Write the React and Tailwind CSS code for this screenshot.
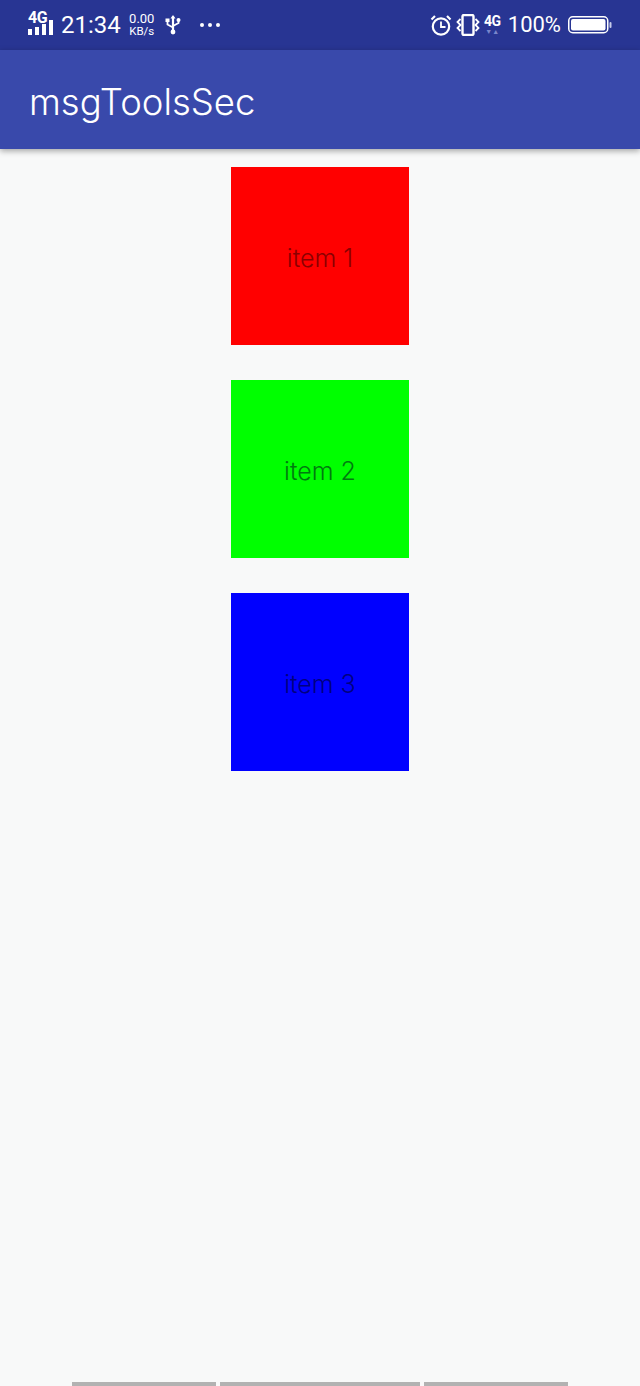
const items = [
  { label: 'item 1', color: 'bg-[#ff0000]', text: 'text-[#8a0000]' },
  { label: 'item 2', color: 'bg-[#00ff00]', text: 'text-[#007a10]' },
  { label: 'item 3', color: 'bg-[#0000ff]', text: 'text-[#00007f]' },
];

const SignalBars = () => (
  <svg width="26" height="16" viewBox="0 0 26 16" fill="white">
    <rect x="0" y="9" width="4" height="6" />
    <rect x="7" y="7" width="4" height="8" />
    <rect x="14" y="4" width="4" height="11" />
    <rect x="21" y="0" width="4" height="15" />
  </svg>
);

const UsbIcon = () => (
  <svg width="16" height="20" viewBox="0 0 16 20" fill="none" stroke="white" strokeWidth="1.8">
    <path d="M8 1.5V18" strokeWidth="2.2" />
    <path d="M2.5 6v3.5L8 12.5" />
    <path d="M13.5 6v2L8 11" />
    <rect x="0.5" y="3.5" width="4" height="3.5" fill="white" stroke="none" />
    <circle cx="13.5" cy="5" r="2" fill="white" stroke="none" />
    <path d="M5.5 3.5L8 0 10.5 3.5Z" fill="white" stroke="none" />
    <circle cx="8" cy="17" r="2.4" fill="white" stroke="none" />
  </svg>
);

const AlarmIcon = () => (
  <svg width="22" height="22" viewBox="0 0 22 22" fill="none" stroke="white" strokeWidth="2.2">
    <circle cx="11" cy="12.5" r="8.2" />
    <path d="M11 7.5v5.5h4.5" strokeWidth="1.8" />
    <path d="M1.5 5.5L5 2M20.5 5.5L17 2" />
  </svg>
);

const VibrateIcon = () => (
  <svg width="24" height="22" viewBox="0 0 24 22" fill="none" stroke="white">
    <rect x="6.5" y="1" width="11" height="20" rx="1.5" strokeWidth="2.4" />
    <path d="M4.5 5L1.5 8 4.5 11 1.5 14 4.5 17" strokeWidth="1.8" />
    <path d="M19.5 5L22.5 8 19.5 11 22.5 14 19.5 17" strokeWidth="1.8" />
  </svg>
);

const Battery = () => (
  <svg width="44" height="18" viewBox="0 0 44 18" fill="none">
    <rect x="0.75" y="0.75" width="39" height="16" rx="4" stroke="white" strokeWidth="1.5" />
    <rect x="3" y="3" width="34.5" height="11.5" rx="2" fill="white" />
    <rect x="41.5" y="6" width="2" height="6" rx="1" fill="#c5cae9" />
  </svg>
);

const StatusBar = () => (
  <div className="h-[50px] bg-[#283593] flex items-center justify-between pl-[28px] pr-[28px] text-white font-['Roboto',sans-serif]">
    <div className="flex items-center">
      <div className="relative w-[26px] h-[24px] mt-[-3px]">
        <span className="absolute left-0 top-[-1px] text-[16px] leading-[14px] font-bold tracking-[-0.5px]">4G</span>
        <div className="absolute left-0 top-[8px]">
          <SignalBars />
        </div>
      </div>
      <span className="text-[24px] leading-none ml-[7px]">21:34</span>
      <div className="flex flex-col items-center ml-[7px] w-[28px] text-[13px] leading-[12px]">
        <span>0.00</span>
        <span className="text-[11.5px]">KB/s</span>
      </div>
      <div className="ml-[9px]">
        <UsbIcon />
      </div>
      <div className="flex gap-[4px] ml-[19px]">
        <span className="w-[4px] h-[4px] rounded-full bg-white" />
        <span className="w-[4px] h-[4px] rounded-full bg-white" />
        <span className="w-[4px] h-[4px] rounded-full bg-white" />
      </div>
    </div>
    <div className="flex items-center">
      <AlarmIcon />
      <div className="ml-[4px]">
        <VibrateIcon />
      </div>
      <div className="flex flex-col items-center ml-[4px] w-[17px]">
        <span className="text-[14px] leading-[13px] font-bold tracking-[-0.5px]">4G</span>
        <span className="text-[7px] leading-[8px] text-[#7986cb]">▼▲</span>
      </div>
      <span className="text-[22px] leading-none ml-[7px]">100%</span>
      <div className="ml-[7px]">
        <Battery />
      </div>
    </div>
  </div>
);

const App = () => {
  return (
    <div className="w-[640px] h-[1386px] bg-[#f8f9f9] flex flex-col overflow-hidden">
      <StatusBar />

      {/* App bar */}
      <div className="h-[99px] bg-[#3949ab] flex items-center pl-[29px] pt-[6px] shadow-[0_2px_6px_rgba(0,0,0,0.35)] z-10">
        <h1 className="text-[36.5px] leading-none text-white font-['Inter',sans-serif] font-light">msgToolsSec</h1>
      </div>

      {/* Items */}
      <div className="flex-1 flex flex-col items-center gap-[35px] pt-[18px]">
        {items.map((item) => (
          <div
            key={item.label}
            className={`w-[178px] h-[178px] flex items-center justify-center pt-[4px] ${item.color}`}
          >
            <span className={`text-[25px] leading-none font-['Inter',sans-serif] font-light ${item.text}`}>{item.label}</span>
          </div>
        ))}
      </div>

      {/* Bottom nav indicators */}
      <div className="h-[4px] flex justify-center gap-[4px]">
        <div className="w-[144px] bg-[#b2b2b2]" />
        <div className="w-[200px] bg-[#b2b2b2]" />
        <div className="w-[144px] bg-[#b2b2b2]" />
      </div>
    </div>
  );
};

export default App;
